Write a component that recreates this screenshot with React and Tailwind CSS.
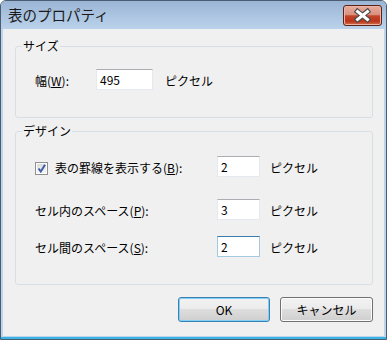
import React from 'react';

function TextBox({ value, width, focused }) {
  return (
    <div
      className={
        'h-[21px] flex items-center pl-[3px] bg-white border text-[12px] text-black ' +
        (focused
          ? 'border-[#a4c9e3] border-t-[#3d7bad]'
          : 'border-[#e3e9ef] border-t-[#abadb3]')
      }
      style={{ width }}
    >
      {value}
    </div>
  );
}

function Check() {
  return (
    <div className="w-[13px] h-[13px] border border-[#8e8f8f] bg-white p-[1px]">
      <div className="w-full h-full bg-[linear-gradient(#dcdcdc,#f7f7f7)] relative">
        <svg width="11" height="11" viewBox="0 0 11 11" className="absolute -left-[1px] -top-[1px]">
          <path d="M2.5 5.5 L4.8 8.5 L9 1.8" fill="none" stroke="#3f5fa6" strokeWidth="2" />
        </svg>
      </div>
    </div>
  );
}

function Button({ children, width, primary }) {
  return (
    <div
      className={
        'h-[25px] flex items-center justify-center rounded-[3px] border text-[12px] text-black ' +
        'bg-[linear-gradient(#f2f2f2_0%,#ebebeb_50%,#dddddd_50%,#cfcfcf_100%)] ' +
        (primary
          ? 'border-[#3c7fb1] shadow-[inset_0_0_0_1px_#7fd0f4]'
          : 'border-[#707070] shadow-[inset_0_0_0_1px_#fcfcfc]')
      }
      style={{ width }}
    >
      {children}
    </div>
  );
}

export default function App() {
  return (
    <div className="w-[387px] h-[340px] flex flex-col bg-[#bcd4ec] border border-[#4a5d72] rounded-t-[6px] overflow-hidden font-['Noto_Sans_CJK_JP',sans-serif]">
      {/* title bar */}
      <div className="h-[28px] flex bg-[linear-gradient(#9bb5d5,#bad2eb)]">
        <div className="pl-[7px] pt-[5px] text-[14.5px] leading-[18px] text-[#1a1a1a]">表のプロパティ</div>
        <div className="ml-auto mr-[4px] mt-[4px] w-[39px] h-[21px] rounded-[3px] border border-[#5c2216] bg-[linear-gradient(#e7ad9f_0%,#d9907e_45%,#c4432a_52%,#b9351b_80%,#d6704f_100%)] shadow-[inset_0_0_0_1px_#eab3a5]">
          <svg width="37" height="19" viewBox="0 0 37 19">
            <path d="M13.5 5.5 L23.5 13.5 M23.5 5.5 L13.5 13.5" stroke="#4a4a4a" strokeWidth="5.2" strokeLinecap="square" />
            <path d="M13.5 5.5 L23.5 13.5 M23.5 5.5 L13.5 13.5" stroke="#ffffff" strokeWidth="3" strokeLinecap="square" />
          </svg>
        </div>
      </div>

      {/* client area */}
      <div className="mx-[2px] flex-1 bg-[#f0f0f0] pl-[12px] pr-[11px] pt-[9px] text-[12px] text-black">
        <fieldset className="border border-[#d5dfe5] rounded-[3px] pb-[27px]">
          <legend className="ml-[6px] px-[1px] leading-[16px]">サイズ</legend>
          <div className="mt-[15px] flex items-center pl-[19px]">
            <div className="w-[61px] pt-[3px]">
              幅(<u>W</u>):
            </div>
            <TextBox value="495" width={57} />
            <div className="ml-[12px] pt-[3px]">ピクセル</div>
          </div>
        </fieldset>

        <fieldset className="mt-[5px] border border-[#d5dfe5] rounded-[3px] pb-[27px]">
          <legend className="ml-[6px] px-[1px] leading-[16px]">デザイン</legend>
          <div className="mt-[17px] flex items-center pl-[19px]">
            <div className="w-[182px] flex items-center">
              <div className="mt-[3px]">
                <Check />
              </div>
              <div className="ml-[7px] pt-[3px]">
                表の罫線を表示する(<u>B</u>):
              </div>
            </div>
            <TextBox value="2" width={43} />
            <div className="ml-[10px] pt-[3px]">ピクセル</div>
          </div>
          <div className="mt-[22px] flex items-center pl-[19px]">
            <div className="w-[182px] pt-[3px]">
              セル内のスペース(<u>P</u>):
            </div>
            <TextBox value="3" width={43} />
            <div className="ml-[10px] pt-[3px]">ピクセル</div>
          </div>
          <div className="mt-[16px] flex items-center pl-[19px]">
            <div className="w-[182px] pt-[3px]">
              セル間のスペース(<u>S</u>):
            </div>
            <TextBox value="2" width={43} focused />
            <div className="ml-[10px] pt-[3px]">ピクセル</div>
          </div>
        </fieldset>

        <div className="mt-[12px] flex justify-end gap-[10px]">
          <Button width={92} primary>OK</Button>
          <Button width={93}>キャンセル</Button>
        </div>
      </div>
      <div className="h-[1px] bg-[#bcd4ec]" />
      <div className="h-[2px] bg-[#37b4e4]" />
    </div>
  );
}
